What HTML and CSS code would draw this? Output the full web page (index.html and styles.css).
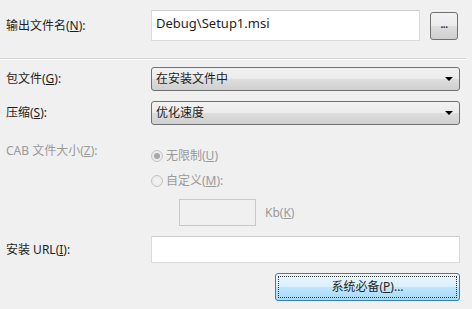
FILE: index.html
```html
<!DOCTYPE html>
<html lang="zh-CN">
  <head>
    <meta charset="UTF-8" />
    <title>安装属性</title>
    <link rel="stylesheet" href="styles.css">
  </head>
  <body>
    <form class="panel">
      <div class="row row-output">
        <label class="label">输出文件名(<u>N</u>):</label>
        <div class="field field-output">
          <div class="textbox textbox-tall">Debug\Setup1.msi</div>
          <button type="button" class="btn btn-browse"><span class="dots">...</span></button>
        </div>
      </div>

      <div class="separator"></div>

      <div class="row row-select">
        <label class="label">包文件(<u>G</u>):</label>
        <div class="select">在安装文件中<span class="arrow"></span></div>
      </div>

      <div class="row row-select row-gap">
        <label class="label">压缩(<u>S</u>):</label>
        <div class="select">优化速度<span class="arrow"></span></div>
      </div>

      <div class="row row-radio row-cab">
        <label class="label label-top disabled">CAB 文件大小(<u>Z</u>):</label>
        <div class="radio-item disabled">
          <span class="radio checked"></span>
          <span>无限制(<u>U</u>)</span>
        </div>
      </div>

      <div class="row row-radio">
        <span class="label"></span>
        <div class="radio-item disabled">
          <span class="radio"></span>
          <span>自定义(<u>M</u>):</span>
        </div>
      </div>

      <div class="row row-size">
        <span class="label"></span>
        <div class="textbox textbox-size"></div>
        <span class="unit disabled">Kb(<u>K</u>)</span>
      </div>

      <div class="row row-url">
        <label class="label">安装 URL(<u>I</u>):</label>
        <div class="textbox textbox-url"></div>
      </div>

      <div class="row row-actions">
        <button type="button" class="btn btn-primary"><span class="focus">系统必备(<u>P</u>)...</span></button>
      </div>
    </form>
  </body>
</html>
```

FILE: styles.css
```css
*,
*::before,
*::after {
  box-sizing: border-box;
}
:root {
  --bg: #f0f0f0;
  --text: #1e1e1e;
  --text-disabled: #9a9a9a;
  --border-btn: #707070;
  --border-box: #dadada;
}
html,
body {
  margin: 0;
  height: 100%;
}
body {
  background: var(--bg);
  color: var(--text);
  font-family: "Noto Sans", "Noto Sans CJK SC", sans-serif;
  font-size: 12px;
  line-height: 16px;
  overflow: hidden;
}
u {
  text-underline-offset: 1px;
}
.panel {
  padding: 10px 12px 0 6px;
}
.row {
  display: flex;
  align-items: center;
}
.label {
  flex: 0 0 145px;
  white-space: nowrap;
}
.disabled {
  color: var(--text-disabled);
}

/* output file */
.row-output {
  height: 31px;
}
.field-output {
  display: flex;
  flex: 1;
  align-items: center;
  height: 31px;
}
.textbox {
  background: #fff;
  border: 1px solid var(--border-box);
  border-top-color: #cfcfcf;
}
.textbox-tall {
  flex: 1;
  height: 31px;
  padding: 4px 4px 0;
  font-size: 13px;
}
.btn {
  font: inherit;
  color: inherit;
  border: 1px solid var(--border-btn);
  border-radius: 3px;
  background: linear-gradient(#f2f2f2 0%, #ebebeb 50%, #dddddd 51%, #cfcfcf 100%);
  padding: 0;
  cursor: default;
}
.btn-browse {
  flex: 0 0 28px;
  height: 28px;
  margin: 0 2px 0 10px;
  display: flex;
  align-items: center;
  justify-content: center;
}
.dots {
  font-size: 10px;
  font-weight: bold;
  line-height: 10px;
  letter-spacing: -0.5px;
  color: #333;
  margin-top: -4px;
}
.separator {
  height: 2px;
  margin: 17px -6px 7px;
  border-top: 1px solid #d5d5d5;
  border-bottom: 1px solid #fff;
}

/* selects */
.row-select {
  height: 24px;
}
.row-gap {
  margin-top: 10px;
}
.select {
  flex: 1;
  height: 24px;
  display: flex;
  align-items: center;
  padding: 0 4px;
  border: 1px solid var(--border-btn);
  border-radius: 3px;
  background: linear-gradient(#f2f2f2 0%, #ebebeb 50%, #dddddd 51%, #cfcfcf 100%);
}
.arrow {
  margin-left: auto;
  margin-right: 2px;
  width: 0;
  height: 0;
  border-left: 4px solid transparent;
  border-right: 4px solid transparent;
  border-top: 4px solid #000;
}

/* radios */
.row-radio {
  height: 25px;
}
.row-cab {
  margin-top: 18px;
}
.label-top {
  align-self: flex-start;
  margin-top: 0;
}
.radio-item {
  display: flex;
  align-items: center;
  gap: 3px;
}
.radio {
  width: 12px;
  height: 12px;
  border-radius: 50%;
  border: 1px solid #c4c4c4;
  background: radial-gradient(circle, #f4f4f4 0%, #e6e6e6 100%);
  display: flex;
  align-items: center;
  justify-content: center;
}
.radio.checked::after {
  content: "";
  width: 6px;
  height: 6px;
  border-radius: 50%;
  background: #a8a8a8;
}

/* size */
.row-size {
  margin-top: 6px;
  height: 27px;
}
.textbox-size {
  flex: 0 0 77px;
  height: 27px;
  margin-left: 28px;
  background: var(--bg);
  border-color: #c8c8c8;
}
.unit {
  margin-left: 9px;
}

/* url */
.row-url {
  margin-top: 10px;
  height: 27px;
}
.textbox-url {
  flex: 1;
  height: 27px;
}

/* actions */
.row-actions {
  margin-top: 10px;
  justify-content: flex-end;
}
.btn-primary {
  width: 185px;
  height: 28px;
  padding: 2px;
  border-color: #3c7fb1;
  background: linear-gradient(#eaf6fd 0%, #d9f0fc 50%, #bee6fd 51%, #a7d9f5 100%);
}
.focus {
  display: flex;
  align-items: center;
  justify-content: center;
  height: 100%;
  border: 1px dotted #333;
}
```
